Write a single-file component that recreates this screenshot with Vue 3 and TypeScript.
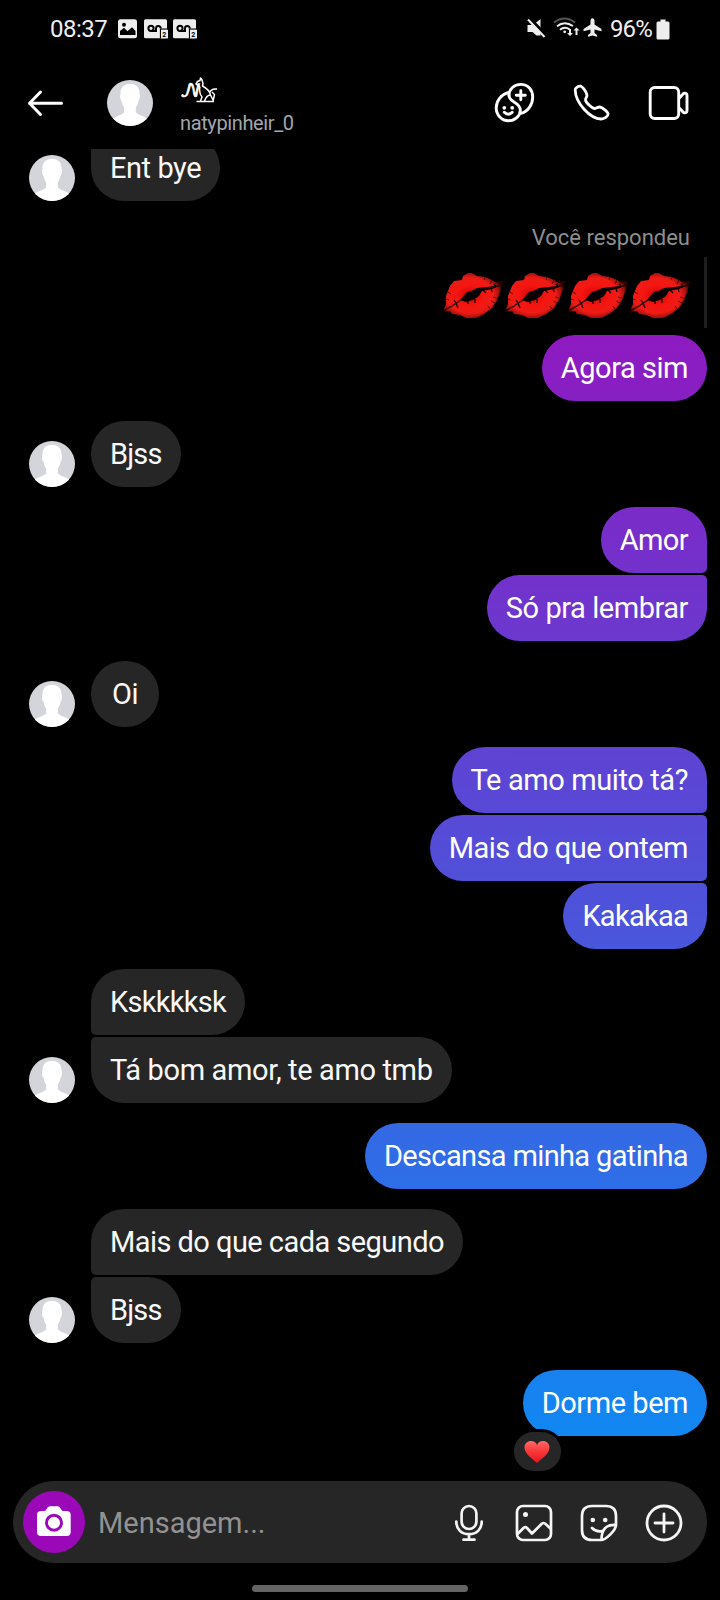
<script setup lang="ts">
interface Message {
  text: string
  tracking: number
  heart?: boolean
}
interface Group {
  mine: boolean
  messages: Message[]
  kind?: 'clipped' | 'reply' | 'last'
}

const groups: Group[] = [
  { mine: false, kind: 'clipped', messages: [{ text: 'Ent bye', tracking: -0.45 }] },
  { mine: true, kind: 'reply', messages: [{ text: 'Agora sim', tracking: -0.47 }] },
  { mine: false, messages: [{ text: 'Bjss', tracking: -0.84 }] },
  { mine: true, messages: [{ text: 'Amor', tracking: -0.59 }, { text: 'Só pra lembrar', tracking: -0.45 }] },
  { mine: false, messages: [{ text: 'Oi', tracking: -0.59 }] },
  {
    mine: true,
    messages: [
      { text: 'Te amo muito tá?', tracking: -0.4 },
      { text: 'Mais do que ontem', tracking: -0.53 },
      { text: 'Kakakaa', tracking: -0.73 },
    ],
  },
  { mine: false, messages: [{ text: 'Kskkkksk', tracking: -0.71 }, { text: 'Tá bom amor, te amo tmb', tracking: -0.37 }] },
  { mine: true, messages: [{ text: 'Descansa minha gatinha', tracking: -0.635 }] },
  { mine: false, messages: [{ text: 'Mais do que cada segundo', tracking: -0.55 }, { text: 'Bjss', tracking: -0.84 }] },
  { mine: true, kind: 'last', messages: [{ text: 'Dorme bem', tracking: -0.47, heart: true }] },
]
</script>

<template>
  <div class="phone">
    <svg class="defs" width="0" height="0" aria-hidden="true">
      <defs>
        <clipPath id="round"><circle cx="23" cy="23" r="23" /></clipPath>
        <radialGradient id="lipFill" cx="0.45" cy="0.5" r="0.56">
          <stop offset="0" stop-color="#c80606" />
          <stop offset="0.4" stop-color="#f51510" />
          <stop offset="0.7" stop-color="#ee1c16" />
          <stop offset="0.88" stop-color="#a5100c" />
          <stop offset="1" stop-color="#2a0403" />
        </radialGradient>
        <linearGradient id="heartFill" x1="0" y1="0" x2="0" y2="1">
          <stop offset="0" stop-color="#ff6a68" />
          <stop offset="0.45" stop-color="#f93a3c" />
          <stop offset="1" stop-color="#e3161c" />
        </linearGradient>
        <symbol id="person" viewBox="0 0 46 46">
          <g clip-path="url(#round)">
            <rect width="46" height="46" fill="#d3d5db" />
            <path fill="#fff" d="M23 3.800C29.500 3.800 32.800 8 32.500 14C33.500 15 33 19.500 31.500 20.700C31 24 30 26 28.800 27.500V32C30 35 36 35.500 41 39V46H5V39C10 35.500 16 35 17.200 32V27.500C16 26 15 24 14.500 20.700C13 19.500 12.500 15 13.500 14C13.200 8 16.500 3.800 23 3.800Z" />
          </g>
        </symbol>
        <symbol id="lips" viewBox="0 0 62 47">
          <path fill="url(#lipFill)" d="M1 39L4 32L4 24L8 14L12 9L20 8L21 4L26 1L30 1L35 4L43 5L50 8L53 10L61 9L59 17L55 28L50 36L42 42L34 46L24 46L18 43L10 42L8 39L2 40Z" />
          <path fill="#080000" d="M18 28L25 20L29 19L35 16L45 15L60 13L50 17L40 19L37 24L31 28L24 30Z" />
          <path fill="none" stroke="#180000" stroke-width="1.3" d="M1 39L10 34L19 28M14 31L12 28M14 31L16 36M26 29V32M33 27V31M41 18L44 21M49 16L50 20M54 14L52 12" />
          <path fill="none" stroke="#250000" stroke-width=".7" d="M51 25L55 26M49 29L53 31M46 34L48 37M4 27L7 28M6 20L9 22M50 8L48 12M55 10L53 12M43 5L42 8" />
        </symbol>
      </defs>
    </svg>

    <header class="status">
      <span class="clock">08:37</span>
      <svg class="notes" width="82" height="22" viewBox="0 0 82 22">
        <rect x="1" y="1.300" width="19" height="19" rx="2.500" fill="#eee" />
        <circle cx="7" cy="6.700" r="2" />
        <path d="M3 17V13L7 9.700L10.500 13.200L15 9.200L18.500 13V17Z" />
        <g v-for="x in [0, 29]" :key="x" :transform="`translate(${x} 0)`">
          <rect x="27" y="1.300" width="23" height="19" rx="1.500" fill="#eee" />
          <g fill="none" stroke="#000" stroke-width="2">
            <circle cx="34" cy="10.300" r="2.600" />
            <path d="M34 12.900H39V10.500A2.400 2.400 0 0 1 43.800 10.500" />
            <path d="M43.500 20.500V11.200H51" stroke-width="1.200" />
          </g>
          <rect x="44" y="11.800" width="7" height="8.600" fill="#eee" />
          <text x="45.300" y="18.800" class="badge">2</text>
        </g>
      </svg>
      <div class="status-right">
        <svg width="80" height="24" viewBox="0 0 80 24">
          <g fill="#eee">
            <g transform="translate(1.500 0)">
              <path d="M0 8H5.500L13 2V18.500L9 18.500L5 15H0Z" />
              <path d="M1 0L18 17.500" stroke="#000" stroke-width="3" />
              <path d="M.5 2.500L17 20" stroke="#eee" stroke-width="2" />
            </g>
            <g fill="none" stroke-width="2">
              <path d="M28 5.500Q38.500 -2.500 49 5.500" stroke="#555" />
              <path d="M31 9.300Q38.500 3.200 47 9" stroke="#eee" />
              <path d="M34 12.800Q38.500 9 43.500 12.300" stroke="#eee" />
            </g>
            <circle cx="38.700" cy="14.800" r="1.400" />
            <path d="M43 12H45V16H47L44 19L41 16H43ZM49.500 18V13.500H47.500L50.500 10.500L53.500 13.500H51.500V18Z" />
            <path d="M65 1.300C66.200 1.300 67 2.600 67 4V7.500L74 12V14.300L67 12.600V16L69.500 18V19.700L65 18.600L60.500 19.700V18L63 16V12.600L56 14.300V12L63 7.500V4C63 2.600 63.800 1.300 65 1.300Z" transform="translate(1.500 0)" />
          </g>
        </svg>
        <span class="percent">96%</span>
        <svg width="14" height="21" viewBox="0 0 14 21"><path fill="#eee" d="M4.500 0.500H9.500V2.500H12Q13.500 2.500 13.500 4V19Q13.500 20.500 12 20.500H2Q.5 20.500 .5 19V4Q.5 2.500 2 2.500H4.500Z" /></svg>
      </div>
    </header>

    <nav class="topbar">
      <svg class="back" width="38" height="30" viewBox="0 0 38 30" fill="none" stroke="#fff" stroke-width="3" stroke-linecap="round" stroke-linejoin="round">
        <path d="M35.500 15.300H3.500M14.500 4L3.500 15.300L14.500 26.500" />
      </svg>
      <svg class="avatar" width="46" height="46"><use href="#person" /></svg>
      <div class="who">
        <div class="name">
          <span class="script">𝒩</span>
          <svg width="22" height="26" viewBox="0 0 22 26" fill="none" stroke="#fff" stroke-width="1.500" stroke-linejoin="round">
            <path d="M1.500 24.500H19M5 9.500L1 7L2.500 4.500L5 3.500L5.500 1L7 3L8 6.500L7.500 9C12 11.500 15 14.500 15.500 18M5 9.500C4 14 4.500 17 7 20L5.500 24M15.500 18L18.500 24M14.500 16C15.500 12.500 18 11.500 22 12M17 15L19.500 17.500L18 24M9.500 24C11 20 12.500 18 15.500 18" />
          </svg>
        </div>
        <div class="handle">natypinheir_0</div>
      </div>
      <div class="actions">
        <svg width="42" height="42" viewBox="0 0 42 42" fill="none" stroke="#fff" stroke-width="2.900" stroke-linecap="round">
          <path d="M14.600 10.300C7 12.500 2.200 19 2.200 26A12.200 12.800 0 0 0 14.300 38.700C21 38.700 26.300 33.800 26.300 28.200C26.300 19.500 15 21 15 13.500" />
          <path d="M15 13.500C15 7 20 2.400 26.700 2.400C34 2.400 38.700 8 38.700 15C38.700 22.500 34 29.700 26.800 31.300" />
          <path d="M26.800 8.800V17.800M22.300 13.300H31.300M10.300 30.300Q14 34 18.200 30.300" />
          <g fill="#fff" stroke="none"><circle cx="10.300" cy="25.800" r="1.900" /><circle cx="18.200" cy="25.800" r="1.900" /></g>
        </svg>
        <svg class="call" width="38" height="38" viewBox="0 0 38 38" fill="none" stroke="#fff" stroke-width="2.800" stroke-linejoin="round">
          <path d="M2.200 6C2 4 5 2 7.500 2.200C9.500 2.500 14 8.500 14 11.200C14 13.300 12.300 14 12.500 16C12.800 18.500 18.800 24.300 21.300 24.500C23.300 24.600 24.500 22.800 27 23C29.200 23.200 35.200 28 35.100 30C35 32.500 31.500 35.100 28 35C17 34.500 2.500 19 2.200 6Z" />
        </svg>
        <svg class="video" width="42" height="36" viewBox="0 0 42 36" fill="none" stroke="#fff" stroke-width="2.900" stroke-linejoin="round">
          <rect x="2.200" y="2.500" width="28.500" height="31" rx="4.500" />
          <path d="M30.800 13.500L35.500 8.500Q39 7.500 39 10.500V25.500Q39 28.500 35.500 27.500L30.800 22.500" />
        </svg>
      </div>
    </nav>

    <main class="chat">
      <section v-for="(group, gi) in groups" :key="gi" class="group" :class="[group.mine ? 'mine' : 'theirs', group.kind]">
        <template v-if="group.kind === 'reply'">
          <div class="reply-label">Você respondeu</div>
          <div class="quoted">
            <svg v-for="n in 4" :key="n" width="62" height="47"><use href="#lips" /></svg>
          </div>
        </template>
        <svg v-if="!group.mine" class="avatar" width="46" height="46"><use href="#person" /></svg>
        <div class="stack">
          <div v-for="(message, mi) in group.messages" :key="mi" class="bubble" :style="{ letterSpacing: `${message.tracking}px` }">
            {{ message.text }}
            <span v-if="message.heart" class="reaction">
              <svg width="26" height="24" viewBox="0 0 26 24"><path fill="url(#heartFill)" d="M13 23C8 18.500 .5 14 .5 7.500C.5 3.500 3.500 1 7 1C10 1 12 2.500 13 5C14 2.500 16 1 19 1C22.500 1 25.500 3.500 25.500 7.500C25.500 14 18 18.500 13 23Z" /></svg>
            </span>
          </div>
        </div>
      </section>
    </main>

    <footer class="composer">
      <div class="camera">
        <svg width="36" height="32" viewBox="0 0 36 32">
          <path fill="#fff" d="M5 6H8.500C10.500 6 11 1.300 14 1.300H21.500C24.500 1.300 25 6 27 6H30.500Q34.700 6 34.700 10V27Q34.700 31 30.500 31H5Q1 31 1 27V10Q1 6 5 6Z" />
          <circle cx="18" cy="17.700" r="7.500" fill="#fff" stroke="#9b08b8" stroke-width="2.900" />
        </svg>
      </div>
      <span class="placeholder">Mensagem...</span>
      <div class="tools">
        <svg width="30" height="38" viewBox="0 0 30 38" fill="none" stroke="#f5f5f5" stroke-width="2.700" stroke-linecap="round">
          <rect x="7.600" y="2" width="14.800" height="23" rx="7.400" />
          <path d="M2.300 17.500C2.300 25.500 7.500 30.200 15 30.200S27.700 25.500 27.700 17.500M15 30.500V35.500M9.500 35.700H20.500" />
        </svg>
        <svg width="38" height="38" viewBox="0 0 38 38" fill="none" stroke="#f5f5f5" stroke-width="2.700" stroke-linejoin="round">
          <rect x="2" y="2" width="34" height="34" rx="6" />
          <circle cx="10.500" cy="10.500" r="2.500" fill="#f5f5f5" stroke="none" />
          <path d="M2.500 30L9 23.500Q10.500 22.500 12 24L17 29.500L27 19.500Q28.500 18.500 30 19.500L36 25" />
        </svg>
        <svg width="38" height="38" viewBox="0 0 38 38" fill="none" stroke="#f5f5f5" stroke-width="2.700" stroke-linecap="round" stroke-linejoin="round">
          <path d="M36 21V12Q36 2 26 2H12Q2 2 2 12V26Q2 36 12 36H21C26 36 36 26 36 21ZM36 21C26 20.500 21.500 25 21.500 36M12 24Q17 28.800 23 26.800" />
          <g fill="#f5f5f5" stroke="none"><circle cx="12.800" cy="16" r="2.300" /><circle cx="25.200" cy="16" r="2.300" /></g>
        </svg>
        <svg width="38" height="38" viewBox="0 0 38 38" fill="none" stroke="#f5f5f5" stroke-width="2.800" stroke-linecap="round">
          <circle cx="19" cy="19" r="17" /><path d="M19 10V28M10 19H28" />
        </svg>
      </div>
    </footer>
    <div class="home"></div>
  </div>
</template>

<style>
body {
  background: #000;
}
</style>

<style scoped>
.phone {
  display: flex;
  flex-direction: column;
  box-sizing: border-box;
  width: 720px;
  height: 1600px;
  overflow: hidden;
  background: #000;
  color: #fff;
  font-family: Roboto, sans-serif;
}
svg {
  display: block;
  flex: none;
}
.defs {
  height: 0;
}
.status {
  display: flex;
  align-items: center;
  height: 58px;
  padding: 0 50px 0 50px;
  color: #eee;
  font-size: 24px;
}
.clock {
  width: 58px;
  letter-spacing: -0.5px;
  white-space: nowrap;
}
.notes {
  margin-left: 9px;
}
.badge {
  font: bold 7px Roboto, sans-serif;
}
.status-right {
  display: flex;
  align-items: center;
  margin-left: auto;
}
.percent {
  width: 43px;
  margin: 0 3px 0 4px;
  letter-spacing: -0.9px;
  white-space: nowrap;
}
.topbar {
  display: flex;
  align-items: center;
  height: 89px;
  margin-bottom: 2px;
  box-sizing: border-box;
  padding: 0 30px 0 26px;
}
.topbar .avatar {
  margin-left: 43px;
}
.who {
  margin-left: 27px;
  height: 62px;
}
.name {
  display: flex;
  align-items: flex-end;
  height: 31px;
}
.script {
  width: 15px;
  font: 19px/22px "DejaVu Math TeX Gyre", "DejaVu Serif", "DejaVu Sans", serif;
  -webkit-text-stroke: 0.7px #fff;
}
.handle {
  height: 24px;
  margin-top: 8px;
  color: #a3a6ab;
  font-size: 20px;
  letter-spacing: -0.38px;
  line-height: 24px;
}
.actions {
  display: flex;
  align-items: center;
  margin-left: auto;
}
.call {
  margin-left: 37px;
}
.video {
  margin-left: 37px;
}
.chat {
  height: 1332px;
  flex: none;
  overflow: hidden;
}
.group {
  display: flex;
  align-items: flex-end;
  margin-top: 20px;
  padding: 0 13px 0 29px;
}
.group.clipped {
  margin-top: -14px;
}
.group.last {
  margin-top: 27px;
}
.mine {
  justify-content: flex-end;
}
.reply {
  flex-direction: column;
  align-items: flex-end;
  justify-content: flex-start;
}
.reply-label {
  height: 31px;
  margin-top: 1px;
  margin-right: 17px;
  color: #8e8e8e;
  font-size: 22px;
  line-height: 32px;
}
.quoted {
  display: flex;
  align-items: center;
  gap: 0.3px;
  height: 71px;
  margin: 4px 0 7px;
  padding: 5px 13px 0 0;
  box-sizing: border-box;
  border-right: 3px solid #1e1e1e;
}
.stack {
  display: flex;
  flex-direction: column;
  gap: 2px;
}
.theirs .stack {
  align-items: flex-start;
  margin-left: 16px;
}
.mine .stack {
  align-items: flex-end;
}
.bubble {
  position: relative;
  box-sizing: border-box;
  min-width: 68px;
  height: 66px;
  padding: 0 19px;
  border-radius: 33px;
  background-color: #262626;
  color: #f8f8f8;
  font-size: 29px;
  line-height: 66px;
  text-align: center;
  white-space: nowrap;
}
.mine .bubble {
  background: linear-gradient(rgb(180, 0, 178) 0, rgb(138, 29, 194) 368px, rgb(21, 132, 240) 1403px, rgb(0, 150, 247) 1600px) fixed;
  color: #fff;
}
.mine .bubble:not(:first-child) {
  border-top-right-radius: 5px;
}
.mine .bubble:not(:last-child) {
  border-bottom-right-radius: 5px;
}
.theirs .bubble:not(:first-child),
.clipped .bubble {
  border-top-left-radius: 5px;
}
.theirs .bubble:not(:last-child) {
  border-bottom-left-radius: 5px;
}
.reaction {
  position: absolute;
  left: -12px;
  top: 59px;
  display: flex;
  align-items: center;
  justify-content: center;
  width: 47px;
  height: 39px;
  border: 3px solid #000;
  border-radius: 23px;
  background: #262626;
}
.composer {
  display: flex;
  align-items: center;
  flex: none;
  box-sizing: border-box;
  height: 82px;
  margin: 0 13px;
  padding: 0 24.5px 0 10px;
  border-radius: 41px;
  background: #262626;
}
.camera {
  display: flex;
  align-items: flex-start;
  justify-content: center;
  box-sizing: border-box;
  width: 62px;
  height: 62px;
  padding-top: 14px;
  border-radius: 50%;
  background: #9b08b8;
}
.placeholder {
  margin: 2px 0 0 13px;
  color: #929292;
  font-size: 29px;
}
.tools {
  display: flex;
  align-items: center;
  gap: 27px;
  margin: 2px 0 0 auto;
}
.tools svg:first-child {
  margin-right: 4px;
}
.home {
  flex: none;
  width: 216px;
  height: 7px;
  margin: 22px auto 0;
  border-radius: 4px;
  background: #646464;
}
</style>
